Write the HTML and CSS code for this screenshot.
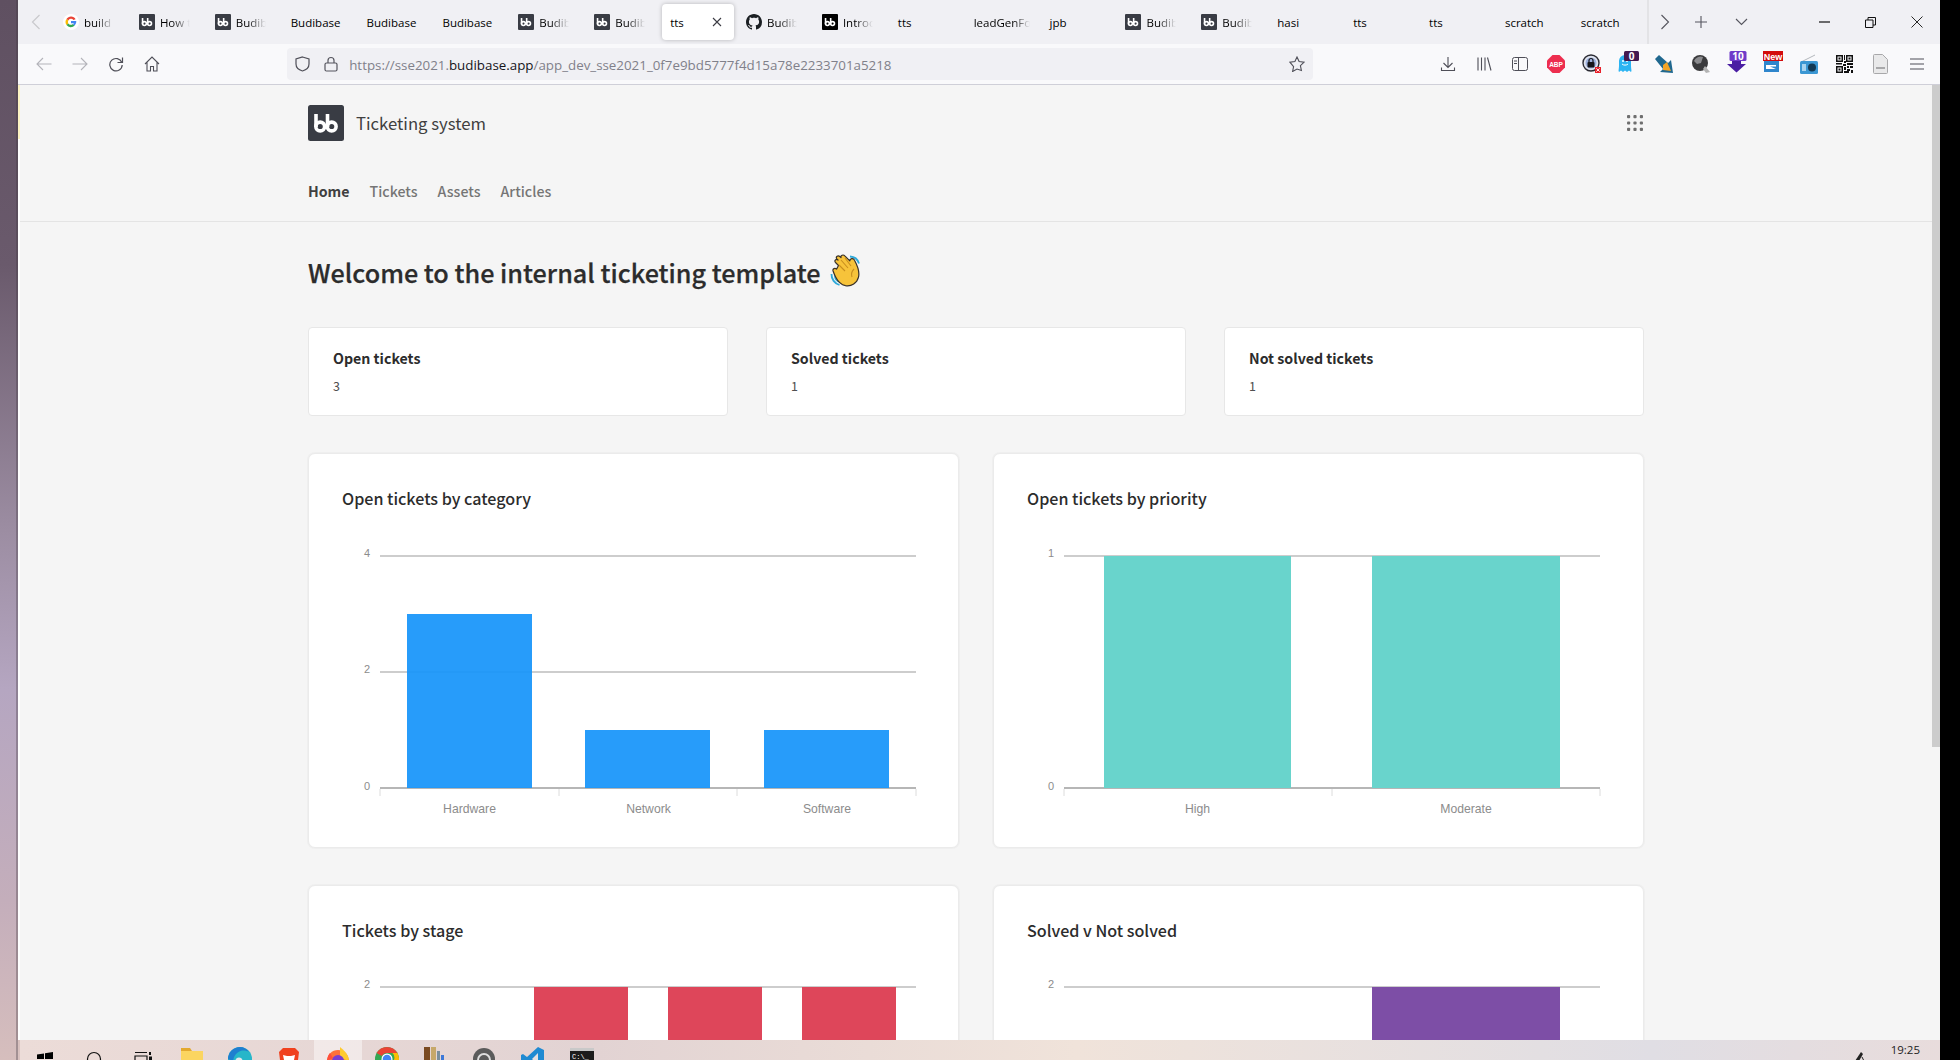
FILE: index.html
```html
<!DOCTYPE html>
<html lang="en">
<head>
<meta charset="utf-8">
<title>Ticketing system</title>
<link rel="stylesheet" href="styles.css">
</head>
<body>
<svg class="defs" width="0" height="0" aria-hidden="true">
  <defs>
    <symbol id="bb" viewBox="0 0 36 36">
      <rect width="36" height="36" rx="2.5" fill="#393c44"/>
      <g fill="none" stroke="#fff" stroke-width="3.6">
        <path d="M8 9v13"/><circle cx="12.2" cy="21.5" r="4.4"/>
        <path d="M19.5 9v13"/><circle cx="23.7" cy="21.5" r="4.4"/>
      </g>
    </symbol>
    <symbol id="bbdark" viewBox="0 0 36 36">
      <rect width="36" height="36" rx="2" fill="#000"/>
      <g fill="none" stroke="#fff" stroke-width="3.6">
        <path d="M8 9v13"/><circle cx="12.2" cy="21.5" r="4.4"/>
        <path d="M19.5 9v13"/><circle cx="23.7" cy="21.5" r="4.4"/>
      </g>
    </symbol>
  </defs>
</svg>
<div class="screen">
  <div class="wallpaper"></div>
  <div class="browser">
    <header class="tabstrip">
      <div class="tabs-back"><svg width="10" height="16" viewBox="0 0 10 16"><path d="M8.5 1L1.5 8l7 7" fill="none" stroke="#c9c9cd" stroke-width="1.2"/></svg></div>
      <div class="tabs">
        <div class="tab"><svg class="fav" viewBox="0 0 16 16"><circle cx="8" cy="8" r="8" fill="#fff"/><path d="M12.6 5.2A5.3 5.3 0 0 0 3.5 5L5.3 6.6A3 3 0 0 1 10.4 6z" fill="#ea4335"/><path d="M3.5 5a5.3 5.3 0 0 0 0 6l1.8-1.5a3 3 0 0 1 0-3z" fill="#fbbc05"/><path d="M3.5 11a5.3 5.3 0 0 0 8.2.5L9.9 10a3 3 0 0 1-4.6-.5z" fill="#34a853"/><path d="M13.3 7H8v2.2h3a2.6 2.6 0 0 1-1.1 1L11.700 11.500A5.300 5.300 0 0 0 13.300 7z" fill="#4285f4"/></svg><span class="tab-label fade">build i</span></div>
        <div class="tab"><svg class="fav"><use href="#bb"/></svg><span class="tab-label fade">How t</span></div>
        <div class="tab"><svg class="fav"><use href="#bb"/></svg><span class="tab-label fade">Budibase</span></div>
        <div class="tab"><span class="tab-label">Budibase</span></div>
        <div class="tab"><span class="tab-label">Budibase</span></div>
        <div class="tab"><span class="tab-label">Budibase</span></div>
        <div class="tab"><svg class="fav"><use href="#bb"/></svg><span class="tab-label fade">Budibase</span></div>
        <div class="tab"><svg class="fav"><use href="#bb"/></svg><span class="tab-label fade">Budibase</span></div>
        <div class="tab active"><span class="tab-label">tts</span><svg class="tab-close" width="10" height="10" viewBox="0 0 10 10"><path d="M1 1l8 8M9 1L1 9" stroke="#3c3c44" stroke-width="1.1"/></svg></div>
        <div class="tab"><svg class="fav" viewBox="0 0 16 16"><path fill="#1b1f23" d="M8 0C3.580 0 0 3.580 0 8c0 3.540 2.290 6.530 5.470 7.590.4.070.55-.17.55-.38 0-.19-.01-.82-.01-1.490-2.010.37-2.530-.49-2.690-.94-.09-.23-.48-.94-.82-1.130-.28-.15-.68-.52-.01-.53.63-.01 1.080.58 1.230.82.72 1.210 1.870.87 2.330.66.07-.52.28-.87.51-1.070-1.780-.2-3.640-.89-3.640-3.950 0-.87.31-1.590.82-2.150-.08-.2-.36-1.020.08-2.120 0 0 .67-.21 2.200.82.64-.18 1.320-.27 2-.27s1.360.09 2 .27c1.530-1.040 2.200-.82 2.200-.82.44 1.100.16 1.920.08 2.120.51.560.82 1.270.82 2.150 0 3.070-1.870 3.750-3.650 3.950.29.250.54.730.54 1.480 0 1.070-.01 1.930-.01 2.200 0 .21.150.460.550.380A8.010 8.010 0 0 0 16 8c0-4.420-3.580-8-8-8z"/></svg><span class="tab-label fade">Budibase</span></div>
        <div class="tab"><svg class="fav"><use href="#bbdark"/></svg><span class="tab-label fade">Introd</span></div>
        <div class="tab"><span class="tab-label">tts</span></div>
        <div class="tab"><span class="tab-label fade-long">leadGenForm</span></div>
        <div class="tab"><span class="tab-label">jpb</span></div>
        <div class="tab"><svg class="fav"><use href="#bb"/></svg><span class="tab-label fade">Budibase</span></div>
        <div class="tab"><svg class="fav"><use href="#bb"/></svg><span class="tab-label fade">Budibase</span></div>
        <div class="tab"><span class="tab-label">hasi</span></div>
        <div class="tab"><span class="tab-label">tts</span></div>
        <div class="tab"><span class="tab-label">tts</span></div>
        <div class="tab"><span class="tab-label">scratch</span></div>
        <div class="tab tab-last"><span class="tab-label">scratch</span></div>
      </div>
      <div class="tab-controls">
        <svg class="tabs-forward" width="10" height="16" viewBox="0 0 10 16"><path d="M1.500 1l7 7-7 7" fill="none" stroke="#55555e" stroke-width="1.100"/></svg>
        <svg width="14" height="14" viewBox="0 0 14 14"><path d="M7 1v12M1 7h12" stroke="#55555e" stroke-width="1.100"/></svg>
        <svg width="13" height="8" viewBox="0 0 13 8"><path d="M1 1l5.500 5.500L12 1" fill="none" stroke="#55555e" stroke-width="1.100"/></svg>
      </div>
      <div class="win-controls">
        <svg width="11" height="2" viewBox="0 0 11 2"><path d="M0 1h11" stroke="#111" stroke-width="1.200"/></svg>
        <svg width="11" height="11" viewBox="0 0 11 11"><path d="M.5 3h7.500v7.500H.5zM3 3V.5h7.500V8H8" fill="none" stroke="#111"/></svg>
        <svg width="12" height="12" viewBox="0 0 12 12"><path d="M.5.5l11 11M11.500.5l-11 11" stroke="#111" stroke-width=".9"/></svg>
      </div>
    </header>

    <nav class="toolbar">
      <div class="tool"><svg width="16" height="14" viewBox="0 0 16 14"><path d="M15.500 7H1M7 1L1 7l6 6" fill="none" stroke="#b4b4ba" stroke-width="1.100"/></svg></div>
      <div class="tool"><svg width="16" height="14" viewBox="0 0 16 14"><path d="M.5 7H15M9 1l6 6-6 6" fill="none" stroke="#b4b4ba" stroke-width="1.100"/></svg></div>
      <div class="tool"><svg width="16" height="16" viewBox="0 0 16 16"><path d="M13.800 6.500A6.200 6.200 0 1 0 14.200 9M14.500 1.500v5h-5" fill="none" stroke="#4f4f58" stroke-width="1.200"/></svg></div>
      <div class="tool"><svg width="16" height="16" viewBox="0 0 16 16"><path d="M1 8l7-7 7 7M3 6.500V15h3.500v-4.500h3V15H13V6.500" fill="none" stroke="#4f4f58" stroke-width="1.100"/></svg></div>
      <div class="urlbar">
        <svg class="url-shield" width="15" height="16" viewBox="0 0 15 16"><path d="M7.500 1l6.500 2v5c0 4-3 6-6.500 7C4 14 1 12 1 8V3z" fill="none" stroke="#4f4f58" stroke-width="1.200"/></svg>
        <svg class="url-lock" width="14" height="16" viewBox="0 0 14 16"><rect x="1" y="7" width="12" height="8" rx="1.500" fill="none" stroke="#55555e" stroke-width="1.200"/><path d="M4 7V4.500a3 3 0 0 1 6 0V7" fill="none" stroke="#55555e" stroke-width="1.200"/></svg>
        <span class="url-text">https://sse2021.<b class="url-domain">budibase.app</b>/app_dev_sse2021_0f7e9bd5777f4d15a78e2233701a5218</span>
        <svg class="url-star" width="16" height="16" viewBox="0 0 16 16"><path d="M8 1l2.100 4.600 5 .6-3.700 3.400 1 4.900L8 13l-4.400 2.500 1-4.900L.9 6.200l5-.6z" fill="none" stroke="#4f4f58" stroke-width="1.100"/></svg>
      </div>
      <div class="tool tool-first"><svg width="16" height="16" viewBox="0 0 16 16"><path d="M8 1v10M3.500 7L8 11.500 12.500 7M1.500 11.500v3h13v-3" fill="none" stroke="#4f4f58" stroke-width="1.100"/></svg></div>
      <div class="tool"><svg width="16" height="16" viewBox="0 0 16 16"><path d="M2 1.500v13M5.500 1.500v13M9 1.500v13M11.500 1.500l3.500 13" fill="none" stroke="#4f4f58" stroke-width="1.100"/></svg></div>
      <div class="tool"><svg width="16" height="14" viewBox="0 0 16 14"><rect x=".5" y=".5" width="15" height="13" rx="2" fill="none" stroke="#4f4f58"/><path d="M6.500.5v13M2 4h3M2 6.500h3" stroke="#4f4f58"/></svg></div>
      <div class="tool"><svg width="18" height="18" viewBox="0 0 18 18"><path d="M5.500 0h7L18 5.500v7L12.500 18h-7L0 12.500v-7z" fill="#ed2e4f"/><text x="9" y="11.500" class="abp">ABP</text></svg></div>
      <div class="tool"><svg width="20" height="20" viewBox="0 0 20 20"><circle cx="9" cy="9" r="8" fill="#dfe3ee" stroke="#2b2b33" stroke-width="1.400"/><circle cx="9" cy="9" r="5.500" fill="#9db1dd"/><rect x="5.500" y="8" width="7" height="5.500" rx="1" fill="#15151a"/><path d="M7 8V6.500a2 2 0 0 1 4 0V8" fill="none" stroke="#15151a" stroke-width="1.200"/><rect x="13" y="13" width="6" height="6" fill="#e8202a"/><path d="M14.300 14.300l3.400 3.400M17.700 14.300l-3.400 3.400" stroke="#fff" stroke-width=".9"/></svg></div>
      <div class="tool"><svg class="ico-over" width="24" height="22" viewBox="0 0 24 22"><path d="M3 21c-1-1 0-3 0-6V10a6 6 0 0 1 12 0v5c0 3 1 5 0 6l-2-1.500-2 1.500-2-1.500-2 1.500-2-1.500z" fill="#2cb4f2"/><path d="M6 13c1.500 1.500 4.500 1.500 6 0" fill="none" stroke="#fff"/><circle cx="7" cy="10" r="1" fill="#fff"/><circle cx="11" cy="10" r="1" fill="#fff"/><rect x="8" y="0" width="15" height="10" rx="1.500" fill="#43194f"/><text x="15.500" y="8.500" class="badge-text">0</text></svg></div>
      <div class="tool"><svg width="20" height="20" viewBox="0 0 20 20"><path d="M1 5l4-4 9 8 3-3 2 13-13-1 3-3z" fill="#20688f"/><path d="M9 11l4-3 4 9-8-1z" fill="#f3a427"/></svg></div>
      <div class="tool"><svg width="20" height="20" viewBox="0 0 20 20"><circle cx="9" cy="9" r="8" fill="#3a3a3c"/><path d="M3 7a7 7 0 0 1 9-4l-2 6-4 1z" fill="#8b8b8e"/><path d="M14 12l5 6-4 1-3-4z" fill="#b3b3b3"/></svg></div>
      <div class="tool"><svg class="ico-over" width="20" height="22" viewBox="0 0 20 22"><path d="M5 9h9v4h5l-9.500 8.500L0 13h5z" fill="#4a1ea3"/><rect x="2.500" y="0" width="17" height="10" rx="1.500" fill="#6f3ac9"/><text x="11" y="8.500" class="badge-text">10</text></svg></div>
      <div class="tool"><svg class="ico-over" width="20" height="22" viewBox="0 0 20 22"><rect x="1" y="9" width="15" height="12" fill="#2f86cc"/><path d="M3 14h10v1.500H7l6 2.500H3z" fill="#fff"/><rect x="0" y="0" width="20" height="10" fill="#d30c0c"/><text x="10" y="8.500" class="new-text">New</text></svg></div>
      <div class="tool"><svg width="20" height="20" viewBox="0 0 20 20"><path d="M2 8L16 1" stroke="#b4b8bd"/><rect x="1" y="7" width="18" height="13" rx="1.500" fill="#3b97d3"/><circle cx="13" cy="13.500" r="4" fill="#123a55"/><rect x="3" y="10" width="4" height="7" fill="#a9d4ef"/></svg></div>
      <div class="tool"><svg width="17" height="18" viewBox="0 0 17 18" class="qr"><path d="M0 0h7v7H0zM10 0h7v7h-7zM0 11h7v7H0z"/><path fill="#f9f9fb" d="M1.500 1.500h4v4h-4zM11.500 1.500h4v4h-4zM1.500 12.500h4v4h-4z"/><path d="M2.500 2.500h2v2h-2zM12.500 2.500h2v2h-2zM2.500 13.500h2v2h-2zM8 0h1v5H8zM8 6h2v2H8zM0 8h6v1.500H0zM7 9h3v2H7zM11 8h6v2h-6zM8 12h2v3H8zM11 11h2v2h-2zM14 11h3v2h-3zM11 14h3v2h-3zM15 15h2v3h-2zM8 16h5v2H8z"/></svg></div>
      <div class="tool"><svg width="15" height="20" viewBox="0 0 15 20"><path d="M.5 1.500a1 1 0 0 1 1-1h8l5 5v13a1 1 0 0 1-1 1h-12a1 1 0 0 1-1-1z" fill="#e9e9ea" stroke="#a8a8aa"/><rect x="3" y="13" width="9" height="2" fill="#a8a8aa"/></svg></div>
      <div class="tool"><svg width="14" height="12" viewBox="0 0 14 12"><path d="M0 1h14M0 6h14M0 11h14" stroke="#4f4f58" stroke-width="1.100"/></svg></div>
    </nav>

    <div class="viewport">
      <div class="page-edge"></div>
      <main class="page">
        <section class="app-header">
          <div class="app-header-inner">
            <div class="brand-row">
              <svg class="brand-logo"><use href="#bb"/></svg>
              <span class="brand-name">Ticketing system</span>
              <svg class="apps-icon" width="16" height="16" viewBox="0 0 16 16" fill="#6e6e6e"><rect x="0" y="0" width="3.200" height="3.200" rx="1"/><rect x="6.400" y="0" width="3.200" height="3.200" rx="1"/><rect x="12.800" y="0" width="3.200" height="3.200" rx="1"/><rect x="0" y="6.400" width="3.200" height="3.200" rx="1"/><rect x="6.400" y="6.400" width="3.200" height="3.200" rx="1"/><rect x="12.800" y="6.400" width="3.200" height="3.200" rx="1"/><rect x="0" y="12.800" width="3.200" height="3.200" rx="1"/><rect x="6.400" y="12.800" width="3.200" height="3.200" rx="1"/><rect x="12.800" y="12.800" width="3.200" height="3.200" rx="1"/></svg>
            </div>
            <div class="nav-row">
              <span class="nav-link current">Home</span>
              <span class="nav-link">Tickets</span>
              <span class="nav-link">Assets</span>
              <span class="nav-link">Articles</span>
            </div>
          </div>
        </section>
        <section class="content">
          <h1 class="welcome">Welcome to the internal ticketing template
            <svg class="wave" width="34" height="34" viewBox="0 0 34 34" role="img" aria-label="waving hand">
              <path d="M20 2.500a10 10 0 0 1 9 7M19.500 6a6 6 0 0 1 6 5" fill="none" stroke="#2ea9d8" stroke-width="1.800"/>
              <path d="M1.500 20a11 11 0 0 0 8 11M5 21a7 7 0 0 0 5 7" fill="none" stroke="#2ea9d8" stroke-width="1.800"/>
              <path d="M8.500 11.500L5.500 8.500c-1.700-2 .8-4 2.500-2.500L6.800 4.800c-1.500-2.200 1.300-4 3-2.300l1.200 1.200c-.7-2.500 2.300-3.500 3.800-1.800l5 5c0-2.500 3.500-3.300 4.700-.7 3 5.500 5.500 11 4 17-1.500 6-7 9.500-13 8.500-5-1-8-5-10-9-1.500-3-2.500-6-2.500-6-.5-2 2-3 3.500-1.500z" fill="#f7c33a" stroke="#38312a" stroke-width="1.200" stroke-linejoin="round"/>
              <path d="M9 11l6 6M11 6l7 8M15 4l6 8M24 15c-2 2-3 5-2 8" fill="none" stroke="#c98f1f" stroke-width="1.100"/>
            </svg>
          </h1>

          <div class="stats">
            <article class="stat"><h2 class="stat-title">Open tickets</h2><p class="stat-value">3</p></article>
            <article class="stat"><h2 class="stat-title">Solved tickets</h2><p class="stat-value">1</p></article>
            <article class="stat"><h2 class="stat-title">Not solved tickets</h2><p class="stat-value">1</p></article>
          </div>

          <div class="charts">
            <article class="chart">
              <h2 class="chart-title">Open tickets by category</h2>
              <svg class="plot" viewBox="0 0 649 300" width="649" height="300">
                <g class="grid"><path d="M71 16h536"/><path d="M71 132h536"/></g>
                <path class="axis" d="M71 248h536"/>
                <path class="tick" d="M71 249v7M250 249v7M428 249v7M607 249v7"/>
                <g class="bar-blue"><rect x="98" y="74" width="125" height="174"/><rect x="276" y="190" width="125" height="58"/><rect x="455" y="190" width="125" height="58"/></g>
                <g class="ylab"><text x="61" y="17">4</text><text x="61" y="133">2</text><text x="61" y="250">0</text></g>
                <g class="xlab"><text x="160.500" y="273">Hardware</text><text x="339.500" y="273">Network</text><text x="518" y="273">Software</text></g>
              </svg>
            </article>
            <article class="chart">
              <h2 class="chart-title">Open tickets by priority</h2>
              <svg class="plot" viewBox="0 0 649 300" width="649" height="300">
                <g class="grid"><path d="M70 16h536"/></g>
                <path class="axis" d="M70 248h536"/>
                <path class="tick" d="M70 249v7M338 249v7M606 249v7"/>
                <g class="bar-teal"><rect x="110" y="16" width="187" height="232"/><rect x="378" y="16" width="188" height="232"/></g>
                <g class="ylab"><text x="60" y="17">1</text><text x="60" y="250">0</text></g>
                <g class="xlab"><text x="203.500" y="273">High</text><text x="472" y="273">Moderate</text></g>
              </svg>
            </article>
            <article class="chart">
              <h2 class="chart-title">Tickets by stage</h2>
              <svg class="plot" viewBox="0 0 649 300" width="649" height="300">
                <g class="grid"><path d="M71 15h536"/></g>
                <g class="bar-red"><rect x="225" y="15" width="94" height="285"/><rect x="359" y="15" width="94" height="285"/><rect x="493" y="15" width="94" height="285"/></g>
                <g class="ylab"><text x="61" y="16">2</text></g>
              </svg>
            </article>
            <article class="chart">
              <h2 class="chart-title">Solved v Not solved</h2>
              <svg class="plot" viewBox="0 0 649 300" width="649" height="300">
                <g class="grid"><path d="M70 15h536"/></g>
                <g class="bar-purple"><rect x="378" y="15" width="188" height="285"/></g>
                <g class="ylab"><text x="60" y="16">2</text></g>
              </svg>
            </article>
          </div>
        </section>
      </main>
      <div class="scrolltrack"><div class="scrollthumb"></div></div>
    </div>

    <footer class="taskbar">
      <div class="task"><svg width="24" height="24" viewBox="0 0 24 24"><path d="M4 7.500l7-1V12H4zM12 6.300L20 5v7h-8zM4 13h7v5.500l-7-1zM12 13h8v7l-8-1.200z" fill="#000"/></svg></div>
      <div class="task"><svg width="24" height="24" viewBox="0 0 24 24"><circle cx="12" cy="12" r="6.500" fill="none" stroke="#111" stroke-width="1.200"/></svg></div>
      <div class="task"><svg width="24" height="24" viewBox="0 0 24 24"><path d="M4 5.500h12M4 9h12v8H4zM4 20.500h12" fill="none" stroke="#111" stroke-width="1.200"/><rect x="18" y="5" width="2" height="3" fill="#111"/><rect x="18" y="9.500" width="3" height="6" fill="#111"/></svg></div>
      <div class="task"><svg width="24" height="24" viewBox="0 0 24 24"><path d="M1 1h9l2 3H1z" fill="#e3a92f"/><path d="M1 4h22v20H1z" fill="#fbd560"/></svg></div>
      <div class="task"><svg width="24" height="24" viewBox="0 0 24 24"><circle cx="12" cy="12" r="12" fill="#27b6c9"/><path d="M0 12a12 12 0 0 1 12-12c4 0 7 2 9 5-5-3-14-2-16 9z" fill="#1f7fd0"/><circle cx="11" cy="14" r="3.500" fill="#e6e6ea"/></svg></div>
      <div class="task"><svg width="24" height="24" viewBox="0 0 24 24"><path d="M6 1h12l4 4-1 8-5 9-4 2-4-2-5-9-1-8z" fill="#f0411e"/><path d="M6 8l4 1h4l4-1-1 5-3 3-2-1-2 1-3-3z" fill="#fff"/></svg></div>
      <div class="task current"><svg width="24" height="24" viewBox="0 0 24 24"><circle cx="12" cy="14" r="11" fill="#ff7139"/><path d="M14 0c4 3 9 8 9 14l-9-3z" fill="#ffcb2e"/><circle cx="12" cy="14" r="6" fill="#7b3fd0"/><path d="M1 14c0-4 2-7 3-8l3 5z" fill="#ff4f3b"/></svg></div>
      <div class="task"><svg width="24" height="24" viewBox="0 0 24 24"><circle cx="12" cy="12" r="12" fill="#34a853"/><path d="M12 0a12 12 0 0 1 10.400 6H12a6 6 0 0 0-5.200 3L1.600 6A12 12 0 0 1 12 0z" fill="#ea4335"/><path d="M22.400 6a12 12 0 0 1-9 18l4-9a6 6 0 0 0 0-9z" fill="#fbbc05"/><circle cx="12" cy="12" r="5.500" fill="#fff"/><circle cx="12" cy="12" r="4.300" fill="#4285f4"/></svg></div>
      <div class="task"><svg width="24" height="24" viewBox="0 0 24 24"><rect x="1" y="0" width="6" height="24" fill="#7a4a21"/><rect x="8" y="0" width="5" height="24" fill="#c7a86a"/><rect x="14" y="4" width="3" height="20" fill="#7b8f9c"/><rect x="18" y="8" width="3" height="16" fill="#3c78d8"/></svg></div>
      <div class="task"><svg width="24" height="24" viewBox="0 0 24 24"><circle cx="12" cy="12" r="11" fill="#5b5b5b"/><circle cx="12" cy="13" r="6" fill="none" stroke="#dedede" stroke-width="2"/></svg></div>
      <div class="task"><svg width="24" height="24" viewBox="0 0 24 24"><path d="M17 0l6 3v18l-6 3L6 14l-4 3-2-1V8l2-1 4 3z" fill="#1f8ad2"/><path d="M17 6l-6 6 6 6z" fill="#e6e0e0"/></svg></div>
      <div class="task"><svg width="24" height="24" viewBox="0 0 24 24"><rect x="0" y="1" width="24" height="22" fill="#1c1c1c"/><rect x="0" y="1" width="24" height="3" fill="#c9c9c9"/><text x="2" y="12" class="cmd-text">C:\_</text></svg></div>
      <div class="tray">
        <svg width="12" height="10" viewBox="0 0 12 10"><path d="M2 10L8 1l2 2-4 7z" fill="#222"/><path d="M9 6l2 4" stroke="#222"/></svg>
        <span class="clock">19:25</span>
      </div>
    </footer>
  </div>
  <div class="blackbar"></div>
</div>
</body>
</html>
```
FILE: styles.css
```css
* { box-sizing: border-box; }
html, body { margin: 0; height: 100%; overflow: hidden; background: #000; }
.defs { position: absolute; }
.screen { display: flex; width: 1960px; height: 1060px; font-family: "Noto Sans CJK SC", "Noto Sans", sans-serif; }
.wallpaper { width: 18px; flex: none; background: linear-gradient(180deg, #5f5061 0%, #6a5a6c 25%, #9c8da2 50%, #b5a6c1 65%, #c4aebb 85%, #d6bebd 100%); border-right: 2px solid rgba(70, 60, 70, .35); }
.blackbar { width: 20px; flex: none; background: #000; }
.browser { flex: 1; min-width: 0; display: flex; flex-direction: column; }

/* Tab strip */
.tabstrip { height: 44px; flex: none; display: flex; align-items: center; background: #f0f0f4; }
.tabs-back { width: 45px; flex: none; padding-left: 13px; display: flex; }
.tabs { display: flex; align-items: center; height: 100%; width: 1586px; flex: none; border-right: 2px solid #e3e3e6; }
.tab { width: 75.9px; flex: none; height: 100%; display: flex; align-items: center; gap: 5px; position: relative; font-family: "Open Sans", sans-serif; font-size: 11.5px; color: #000; }
.fav { width: 16px; height: 16px; flex: none; }
.tab-label { white-space: nowrap; }
.fade { width: 30px; overflow: hidden; -webkit-mask-image: linear-gradient(90deg, #000 40%, transparent 100%); mask-image: linear-gradient(90deg, #000 40%, transparent 100%); }
.fade-long { width: 56px; overflow: hidden; -webkit-mask-image: linear-gradient(90deg, #000 70%, transparent 100%); mask-image: linear-gradient(90deg, #000 70%, transparent 100%); }
.tab.active::before { content: ""; position: absolute; left: -8px; width: 72px; top: 4px; bottom: 4px; background: #fff; border-radius: 4px; box-shadow: 0 0 4px rgba(0,0,0,.25); }
.tab-label, .tab-close { position: relative; }
.tab-close { position: absolute; left: 42px; }
.tab-controls { display: flex; align-items: center; width: 126px; flex: none; padding-left: 11px; gap: 27px; }
.tabs-forward { margin-right: -3px; }
.win-controls { flex: 1; display: flex; align-items: center; padding-left: 44px; gap: 35px; }

/* Toolbar */
.toolbar { height: 41px; flex: none; display: flex; align-items: center; padding-left: 8px; background: #f9f9fb; border-bottom: 1px solid #cfcfd8; }
.tool { width: 36.05px; flex: none; display: flex; align-items: center; justify-content: center; height: 100%; }
.tool-first { margin-left: 117px; }
.ico-over { margin-top: -4px; }
.urlbar { margin-left: 117px; width: 1026px; height: 32px; flex: none; display: flex; align-items: center; background: #f0f0f4; border-radius: 4px; padding-left: 8px; padding-right: 8px; }
.url-lock { margin-left: 14px; }
.url-text { margin-left: 11px; margin-top: 1px; flex: 1; font-family: "Open Sans", sans-serif; font-size: 13.35px; color: #80808a; white-space: nowrap; }
.url-domain { font-weight: 400; color: #15141a; }
.abp { font-family: "Liberation Sans", sans-serif; font-size: 6.5px; font-weight: 700; fill: #fff; text-anchor: middle; }
.badge-text { font-family: "Open Sans", sans-serif; font-size: 10px; font-weight: 700; fill: #fff; text-anchor: middle; }
.new-text { font-family: "Liberation Sans", sans-serif; font-size: 9px; font-weight: 700; fill: #fff; text-anchor: middle; }
.qr { fill: #111; }

/* Viewport */
.viewport { flex: 1; min-height: 0; display: flex; background: #f5f5f5; }
.page-edge { width: 2px; flex: none; background: linear-gradient(180deg, #fdf4c4 0, #fdf4c4 54px, #ffffff 54px, #ffffff 100%); }
.page { flex: 1; min-width: 0; overflow: hidden; background: #f5f5f5; }
.scrolltrack { width: 8px; flex: none; }
.scrollthumb { height: 662px; background: #cccccc; }

/* App header */
.app-header { border-bottom: 1px solid #e4e4e4; height: 137px; padding-top: 20px; }
.app-header-inner, .content { width: 1336px; margin: 0 auto; }
.brand-row { display: flex; align-items: center; height: 36px; }
.brand-logo { width: 36px; height: 36px; flex: none; }
.brand-name { margin-left: 12px; font-size: 16.7px; line-height: 24px; color: #404040; }
.apps-icon { margin-left: auto; margin-right: 1px; }
.nav-row { display: flex; gap: 20px; margin-top: 38px; line-height: 24px; }
.nav-link { font-size: 14.2px; font-weight: 500; color: #757575; }
.nav-link.current { color: #404040; font-weight: 700; }

/* Content */
.welcome { margin: 0; padding-top: 31px; height: 105px; display: flex; align-items: flex-start; gap: 9px; font-size: 25.2px; line-height: 38px; font-weight: 500; color: #2c2c2c; -webkit-text-stroke: .25px #2c2c2c; }
.wave { flex: none; margin-top: 1px; }
.stats { display: grid; grid-template-columns: repeat(3, 420px); column-gap: 38px; }
.stat { height: 89px; background: #fff; border: 1px solid #e7e7e7; border-radius: 4px; padding: 18px 24px 0; }
.stat-title { margin: 0; font-size: 14.2px; line-height: 24px; font-weight: 700; color: #2c2c2c; }
.stat-value { margin: 5px 0 0; font-size: 12.5px; line-height: 22px; color: #505050; }
.charts { display: grid; grid-template-columns: repeat(2, 651px); column-gap: 34px; row-gap: 37px; margin-top: 37px; }
.chart { height: 395px; background: #fff; border: 1px solid #ebebeb; border-radius: 7px; padding: 32px 0 0; box-shadow: 0 0 0 1px #efefef; }
.chart-title { margin: 0 0 30px 33px; font-size: 16.1px; line-height: 24px; font-weight: 500; color: #2c2c2c; }
.plot { display: block; }
.grid path { stroke: #bdbdbd; stroke-width: 1.5; fill: none; }
.axis { stroke: #9e9e9e; stroke-width: 1.5; fill: none; }
.tick { stroke: #dcdcdc; stroke-width: 1; fill: none; }
.bar-blue { fill: #1a96fa; fill-opacity: .94; }
.bar-teal { fill: #69d4cc; }
.bar-red { fill: #de465a; }
.bar-purple { fill: #7d4ea6; }
.ylab text { font-family: "Liberation Sans", sans-serif; font-size: 11px; fill: #8c8c8c; text-anchor: end; }
.xlab text { font-family: "Liberation Sans", sans-serif; font-size: 12.2px; fill: #8c8c8c; text-anchor: middle; }

/* Taskbar */
.taskbar { height: 20px; flex: none; overflow: hidden; display: flex; padding-left: 1px; border-left: 2px solid #d9c2c0; background: linear-gradient(90deg, #ecdcd8 0%, #e2d3d3 30%, #f0e3da 55%, #e0dee4 85%, #e8dcdc 100%); }
.task { width: 48.75px; height: 44px; flex: none; display: flex; justify-content: center; padding-top: 7px; }
.task.current { background: rgba(255,255,255,.45); }
.cmd-text { font-family: "Liberation Mono", monospace; font-size: 7px; fill: #fff; }
.tray { margin-left: auto; display: flex; align-items: flex-start; padding-right: 20px; }
.tray svg { margin-top: 11px; margin-right: 26px; }
.clock { font-family: "Open Sans", sans-serif; font-size: 11.5px; line-height: 20px; color: #222; }
```
